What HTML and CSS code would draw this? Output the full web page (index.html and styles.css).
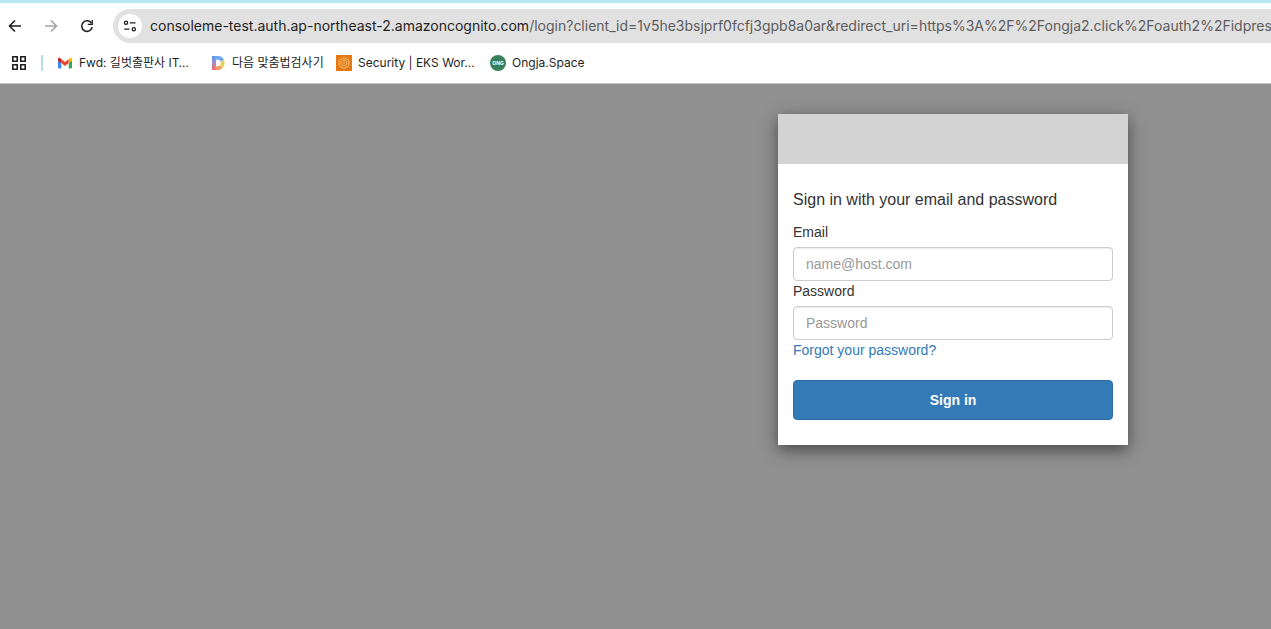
FILE: index.html
```html
<!DOCTYPE html>
<html lang="en">
<head>
    <meta charset="UTF-8">
    <meta name="viewport" content="width=device-width, initial-scale=1.0">
    <title>Signin</title>
    <link rel="stylesheet" href="styles.css">
</head>
<body>
    <header class="browser">
        <div class="toolbar">
            <button type="button" class="nav-button" aria-label="Back">
                <svg width="16" height="16" viewBox="0 0 16 16"><path d="M14 8H3M8 2.5L2.500 8L8 13.500"/></svg>
            </button>
            <button type="button" class="nav-button disabled" aria-label="Forward" disabled>
                <svg width="16" height="16" viewBox="0 0 16 16"><path d="M2 8h11M8 2.500L13.500 8L8 13.500"/></svg>
            </button>
            <button type="button" class="nav-button" aria-label="Reload">
                <svg width="16" height="16" viewBox="0 0 16 16"><path d="M13.200 9.200A5.300 5.300 0 1 1 12.500 5.200"/><path class="fill" d="M13.900 1.900V7H8.800V5.700H12.600V1.900Z"/></svg>
            </button>
            <div class="address-bar">
                <button type="button" class="site-info" aria-label="View site information">
                    <svg width="16" height="16" viewBox="0 0 16 16"><circle cx="4" cy="4.800" r="1.600"/><path d="M7.800 4.800h5.700M2.300 11.200h5.200"/><circle cx="11.800" cy="11.200" r="1.600"/></svg>
                </button>
                <div class="url" role="textbox" aria-label="Address" contenteditable="true" spellcheck="false"><span class="host">consoleme-test.auth.ap-northeast-2.amazoncognito.com</span>/login?client_id=1v5he3bsjprf0fcfj3gpb8a0ar&amp;redirect_uri=https%3A%2F%2Fongja2.click%2Foauth2%2Fidpres</div>
            </div>
        </div>

        <nav class="bookmarks">
            <button type="button" class="apps" aria-label="Apps">
                <svg width="16" height="16" viewBox="0 0 16 16"><path d="M1.800 1.800h4.400v4.400H1.800zM9.800 1.800h4.400v4.400H9.800zM1.800 9.800h4.400v4.400H1.800zM9.800 9.800h4.400v4.400H9.800z"/></svg>
            </button>
            <span class="separator"></span>
            <a href="#" class="bookmark mail">
                <svg width="16" height="16" viewBox="0 0 16 16">
                    <path fill="#4285f4" d="M1 4.500L4.300 7v6.500H2a1 1 0 0 1-1-1z"/>
                    <path fill="#34a853" d="M15 4.500L11.700 7v6.500H14a1 1 0 0 0 1-1z"/>
                    <path fill="#ea4335" d="M4.300 4.100L8 6.900l3.700-2.800v4L8 10.900L4.300 8.100z"/>
                    <path fill="#c5221f" d="M1 4.300C1 2.700 2.700 2.500 3.500 3.400l.8.700v4L1 5.700z"/>
                    <path fill="#fbbc04" d="M15 4.300c0-1.600-1.700-1.800-2.500-.9l-.8.700v4L15 5.700z"/>
                </svg>
                <span>Fwd: 길벗출판사 IT…</span>
            </a>
            <a href="#" class="bookmark daum">
                <svg width="16" height="16" viewBox="0 0 16 16">
                    <defs>
                        <linearGradient id="daum" x1="0" y1="0" x2="0" y2="1">
                            <stop offset="0" stop-color="#5798f5"/>
                            <stop offset=".45" stop-color="#9b91d5"/>
                            <stop offset="1" stop-color="#ff6464"/>
                        </linearGradient>
                    </defs>
                    <path fill="url(#daum)" d="M2 1h4v14H2z"/>
                    <path fill="#71a9ec" d="M5 1h3c3 0 5 1.500 6 4l-3.500 1.500C10 5.200 9 4.800 8 4.800H5z"/>
                    <path fill="#e4d35b" d="M14 5c1.200 3 .5 6-1.500 8L9.500 10.500c1.300-1 1.600-2.500 1-4z"/>
                    <path fill="#f49a67" d="M12.500 13C11.300 14.300 9.700 15 8 15H5v-3.800h3c.6 0 1.100-.2 1.500-.7z"/>
                </svg>
                <span>다음 맞춤법검사기</span>
            </a>
            <a href="#" class="bookmark eks">
                <svg width="16" height="16" viewBox="0 0 16 16">
                    <path fill="#e47911" d="M0 0h16v16H0z"/>
                    <path fill="none" stroke="#ffd39c" stroke-width=".8" d="M8 2.500l4.800 2.700v5.600L8 13.500L3.200 10.800V5.200zM8 5l2.700 1.500v3L8 11L5.300 9.500v-3zM8 7v2"/>
                </svg>
                <span>Security | EKS Wor…</span>
            </a>
            <a href="#" class="bookmark ongja">
                <span class="ongja-icon">ONG</span>
                <span>Ongja.Space</span>
            </a>
        </nav>
    </header>

    <main class="background">
        <div class="modal-content">
            <div class="banner"></div>
            <form class="modal-body">
                <h1>Sign in with your email and password</h1>
                <label for="email">Email</label>
                <input type="email" id="email" name="email" placeholder="name@host.com">
                <label for="password">Password</label>
                <input type="password" id="password" name="password" placeholder="Password">
                <a class="forgot" href="#">Forgot your password?</a>
                <button type="submit" class="submit-button">Sign in</button>
            </form>
        </div>
    </main>
</body>
</html>
```
FILE: styles.css
```css
* {
    box-sizing: border-box;
}

body {
    margin: 0;
    min-height: 100vh;
    display: flex;
    flex-direction: column;
    font-family: "Liberation Sans", Arial, sans-serif;
    font-size: 14px;
    line-height: 20px;
    color: #333;
    overflow-x: hidden;
}

button {
    font-family: inherit;
    cursor: pointer;
}

a {
    text-decoration: none;
}

/* browser bar */
.browser {
    border-top: 3px solid #b5e6f2;
    border-bottom: 1px solid #c4c4c4;
    background-color: #fff;
    font-family: Inter, "Noto Sans CJK KR", sans-serif;
    color: #1f1f1f;
}

.toolbar {
    display: flex;
    align-items: center;
    gap: 20px;
    padding: 6px 0 0 7px;
}

.nav-button, .apps, .site-info {
    display: flex;
    flex: none;
    padding: 0;
    border: 0;
    background: none;
}

.nav-button svg, .apps svg, .site-info svg {
    fill: none;
    stroke: #1f1f1f;
    stroke-width: 1.6;
}

.site-info svg {
    stroke-width: 1.3;
}

.nav-button .fill {
    fill: #1f1f1f;
    stroke: none;
}

.nav-button.disabled svg {
    stroke: #a5a5a5;
}

.address-bar {
    flex: 1;
    min-width: 0;
    height: 34px;
    margin-left: -2px;
    padding-left: 5px;
    display: flex;
    align-items: center;
    gap: 8px;
    border-radius: 17px 0 0 17px;
    background-color: #e1e1e1;
}

.site-info {
    width: 24px;
    height: 24px;
    align-items: center;
    justify-content: center;
    border-radius: 50%;
    background-color: #fff;
}

.url {
    flex: 1;
    min-width: 0;
    overflow: hidden;
    white-space: nowrap;
    font-size: 14px;
    color: #5c5c5c;
}

.host {
    color: #1f1f1f;
}

.bookmarks {
    height: 40px;
    display: flex;
    align-items: center;
    padding-left: 11px;
    font-size: 12px;
}

.separator {
    width: 2px;
    height: 16px;
    margin: 0 14px;
    background-color: #b5e0e8;
}

.bookmark {
    display: flex;
    align-items: center;
    gap: 6px;
    color: #1f1f1f;
    white-space: nowrap;
}

.mail {
    width: 153px;
}

.daum {
    width: 126px;
}

.eks {
    width: 154px;
}

.ongja-icon {
    width: 16px;
    height: 16px;
    border-radius: 50%;
    background-color: #38805a;
    color: #fff;
    font-size: 5px;
    font-weight: 700;
    line-height: 16px;
    text-align: center;
}

/* sign in page */
.background {
    flex: 1;
    display: flex;
    justify-content: flex-end;
    align-items: flex-start;
    padding: 30px 143px 30px 15px;
    background-color: #909090;
}

.modal-content {
    width: 350px;
    background-color: #fff;
    box-shadow: 0 5px 15px rgba(0, 0, 0, 0.5);
}

.banner {
    height: 50px;
    background-color: #d3d3d3;
}

.modal-body {
    padding: 25px 15px;
}

h1 {
    margin: 0 0 11px;
    font-size: 16px;
    font-weight: 400;
    line-height: 22px;
}

label {
    display: block;
    margin-bottom: 5px;
}

.modal-body input {
    display: block;
    width: 100%;
    height: 34px;
    padding: 6px 12px;
    border: 1px solid #ccc;
    border-radius: 4px;
    box-shadow: inset 0 1px 1px rgba(0, 0, 0, 0.075);
    font-family: inherit;
    font-size: 14px;
    color: #555;
}

.modal-body input::placeholder {
    color: #999;
}

.forgot {
    display: block;
    color: #337ab7;
}

.forgot:hover {
    text-decoration: underline;
}

.submit-button {
    width: 100%;
    height: 40px;
    margin-top: 20px;
    border: 1px solid #2e6da4;
    border-radius: 4px;
    background-color: #337ab7;
    color: #fff;
    font-size: 14px;
    font-weight: 700;
}

.submit-button:hover {
    background-color: #286090;
}
```
